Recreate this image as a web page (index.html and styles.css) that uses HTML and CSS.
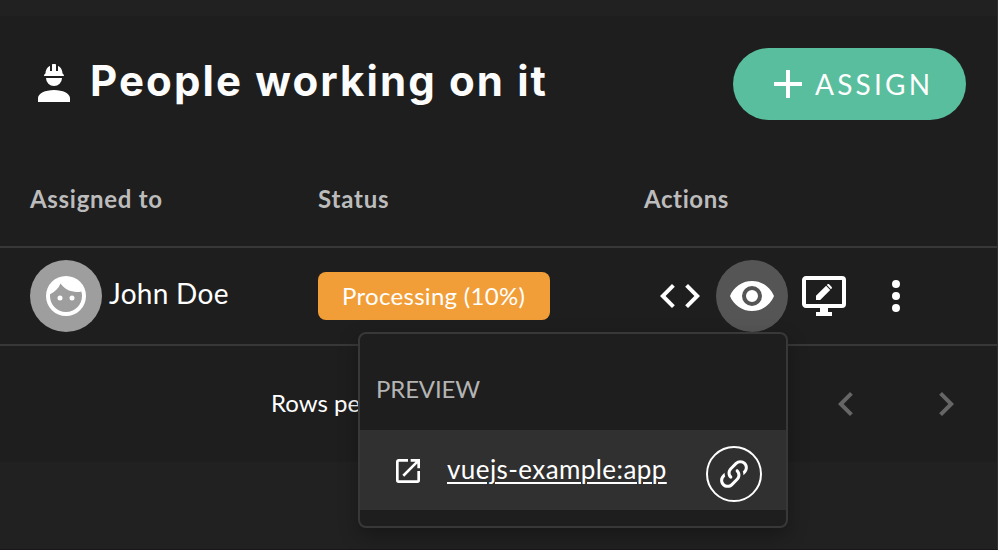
FILE: index.html
```html
<!DOCTYPE html>
<html lang="en">
<head>
<meta charset="utf-8">
<title>People working on it</title>
<link rel="stylesheet" href="styles.css">
</head>
<body>
<main class="card">
  <header class="card-header">
    <svg class="icon" viewBox="0 0 24 24"><path d="M12,15C7.58,15 4,16.79 4,19V21H20V19C20,16.79 16.42,15 12,15M8,9A4,4 0 0,0 12,13A4,4 0 0,0 16,9M11.5,2C11.2,2 11,2.21 11,2.5V5.5H10V3C10,3 7.75,3.86 7.75,6.75C7.75,6.75 7,6.89 7,8H17C16.95,6.89 16.25,6.75 16.25,6.75C16.25,3.86 14,3 14,3V5.5H13V2.5C13,2.21 12.81,2 12.5,2H11.5Z"/></svg>
    <h1 class="title">People working on it</h1>
    <button class="assign">
      <svg class="icon" viewBox="0 0 24 24"><path d="M19,13H13V19H11V13H5V11H11V5H13V11H19V13Z"/></svg>
      <span class="assign-label">ASSIGN</span>
    </button>
  </header>
  <section class="table">
    <div class="row head">
      <span class="th-assigned">Assigned to</span>
      <span class="th-status">Status</span>
      <span class="th-actions">Actions</span>
    </div>
    <div class="row person">
      <div class="user">
        <span class="avatar"><svg class="icon" viewBox="0 0 24 24"><path d="M9,11.75A1.25,1.25 0 0,0 7.75,13A1.25,1.25 0 0,0 9,14.25A1.25,1.25 0 0,0 10.25,13A1.25,1.25 0 0,0 9,11.75M15,11.75A1.25,1.25 0 0,0 13.75,13A1.25,1.25 0 0,0 15,14.25A1.25,1.25 0 0,0 16.25,13A1.25,1.25 0 0,0 15,11.75M12,2A10,10 0 0,0 2,12A10,10 0 0,0 12,22A10,10 0 0,0 22,12A10,10 0 0,0 12,2M12,20C7.59,20 4,16.41 4,12C4,11.71 4,11.42 4.05,11.14C6.41,10.09 8.28,8.16 9.26,5.77C11.07,8.33 14.05,10 17.42,10C18.2,10 18.95,9.91 19.67,9.74C19.88,10.45 20,11.21 20,12C20,16.41 16.41,20 12,20Z"/></svg></span>
        <span class="name">John Doe</span>
      </div>
      <div><span class="chip"><span class="chip-label">Processing (10%)</span></span></div>
      <div class="actions">
        <span class="action"><svg class="icon" viewBox="0 0 24 24"><path d="M14.6,16.6L19.2,12L14.6,7.4L16,6L22,12L16,18L14.6,16.6M9.4,16.6L4.8,12L9.4,7.4L8,6L2,12L8,18L9.4,16.6Z"/></svg></span>
        <span class="action active"><svg class="icon" viewBox="0 0 24 24"><path d="M12,9A3,3 0 0,0 9,12A3,3 0 0,0 12,15A3,3 0 0,0 15,12A3,3 0 0,0 12,9M12,17A5,5 0 0,1 7,12A5,5 0 0,1 12,7A5,5 0 0,1 17,12A5,5 0 0,1 12,17M12,4.5C7,4.5 2.73,7.61 1,12C2.73,16.39 7,19.5 12,19.5C17,19.5 21.27,16.39 23,12C21.27,7.61 17,4.5 12,4.5Z"/></svg></span>
        <span class="action"><svg class="icon" viewBox="0 0 24 24"><path d="M21,16V4H3V16H21M21,2A2,2 0 0,1 23,4V16A2,2 0 0,1 21,18H14V20H16V22H8V20H10V18H3C1.89,18 1,17.1 1,16V4C1,2.89 1.89,2 3,2H21M8,14H10.1L15.1,8.95L13.05,6.9L8,11.9V14M15.85,8.2C16.05,8 16.05,7.65 15.85,7.45L14.55,6.15C14.35,5.95 14,5.95 13.8,6.15L13.4,6.55L15.45,8.6L15.85,8.2Z"/></svg></span>
        <span class="action"><svg class="icon" viewBox="0 0 24 24"><path d="M12,16A2,2 0 0,1 14,18A2,2 0 0,1 12,20A2,2 0 0,1 10,18A2,2 0 0,1 12,16M12,10A2,2 0 0,1 14,12A2,2 0 0,1 12,14A2,2 0 0,1 10,12A2,2 0 0,1 12,10M12,4A2,2 0 0,1 14,6A2,2 0 0,1 12,8A2,2 0 0,1 10,6A2,2 0 0,1 12,4Z"/></svg></span>
      </div>
    </div>
  </section>
  <footer class="pager">
    <span class="rows-label">Rows per page:</span>
    <div class="arrows">
      <svg class="icon" viewBox="0 0 24 24"><path d="M15.41,16.58L10.83,12L15.41,7.41L14,6L8,12L14,18L15.41,16.58Z"/></svg>
      <svg class="icon" viewBox="0 0 24 24"><path d="M8.59,16.58L13.17,12L8.59,7.41L10,6L16,12L10,18L8.59,16.58Z"/></svg>
    </div>
  </footer>
</main>
<div class="menu">
  <div class="menu-title"><span class="menu-title-text">PREVIEW</span></div>
  <div class="menu-item">
    <svg class="open-icon" viewBox="0 0 24 24"><path d="M14,3V5H17.59L7.76,14.83L9.17,16.24L19,6.41V10H21V3M19,19H5V5H12V3H5C3.89,3 3,3.9 3,5V19A2,2 0 0,0 5,21H19A2,2 0 0,0 21,19V12H19V19Z"/></svg>
    <a class="menu-link">vuejs-example:app</a>
    <span class="copy"><svg viewBox="0 0 24 24"><path d="M10.59,13.41C11,13.8 11,14.44 10.59,14.83C10.2,15.22 9.56,15.22 9.17,14.83C7.22,12.88 7.22,9.71 9.17,7.76V7.76L12.71,4.22C14.66,2.27 17.83,2.27 19.78,4.22C21.73,6.17 21.73,9.34 19.78,11.29L18.29,12.78C18.3,11.96 18.17,11.14 17.89,10.36L18.36,9.88C19.54,8.71 19.54,6.81 18.36,5.64C17.19,4.46 15.29,4.46 14.12,5.64L10.59,9.17C9.41,10.34 9.41,12.24 10.59,13.41M13.41,9.17C13.8,8.78 14.44,8.78 14.83,9.17C16.78,11.12 16.78,14.29 14.83,16.24V16.24L11.29,19.78C9.34,21.73 6.17,21.73 4.22,19.78C2.27,17.83 2.27,14.66 4.22,12.71L5.71,11.22C5.7,12.04 5.83,12.86 6.11,13.65L5.64,14.12C4.46,15.29 4.46,17.19 5.64,18.36C6.81,19.54 8.71,19.54 9.88,18.36L13.41,14.83C14.59,13.66 14.59,11.76 13.41,10.59C13,10.2 13,9.56 13.41,9.17Z"/></svg></span>
  </div>
</div>
</body>
</html>
```
FILE: styles.css
```css
* { box-sizing: border-box; }
body {
  margin: 0;
  height: 550px;
  padding-top: 16px;
  overflow: hidden;
  position: relative;
  background: #212121;
  color: #fff;
  font-family: Lato, "Liberation Sans", sans-serif;
  border-right: 1px solid #303030;
  border-bottom: 1px solid #1a151a;
}
svg { display: block; fill: currentColor; flex: none; }
.icon { width: 48px; height: 48px; }
.card { height: 446px; background: #1e1e1e; }
.card-header {
  height: 136px;
  padding: 0 31px 0 30px;
  display: flex;
  align-items: center;
}
.title {
  margin: 0 0 6px 12px;
  font: 700 42px/60px Inter, sans-serif;
  letter-spacing: 2.1px;
  color: #fcfcfc;
  white-space: nowrap;
}
.assign {
  margin-left: auto;
  width: 233px;
  height: 72px;
  padding: 0 0 0 31px;
  border: 0;
  border-radius: 36px;
  background: #58be9d;
  color: #fff;
  display: flex;
  align-items: center;
  font: 400 28px/36px Lato, sans-serif;
}
.assign-label { margin-left: 3px; letter-spacing: 3.2px; }
.row {
  display: grid;
  grid-template-columns: 288px 326px 1fr;
  align-items: center;
  padding-left: 30px;
  border-bottom: 2px solid #383838;
}
.head {
  height: 96px;
  color: #bcbcbc;
  font-weight: 700;
  font-size: 24px;
  line-height: 32px;
}
.th-assigned { letter-spacing: 0.7px; }
.th-status { letter-spacing: 0.8px; }
.th-actions { letter-spacing: 0.6px; }
.person { height: 98px; }
.user { display: flex; align-items: center; }
.avatar, .action {
  width: 72px;
  height: 72px;
  border-radius: 50%;
  display: flex;
  align-items: center;
  justify-content: center;
}
.avatar { background: #9e9e9e; }
.name { margin: 0 0 6px 7px; font-size: 28px; line-height: 36px; letter-spacing: 0.3px; }
.chip {
  width: 232px;
  height: 48px;
  border-radius: 8px;
  background: #f29e38;
  display: flex;
  align-items: center;
  padding: 0 0 2px 24px;
  font-size: 24px;
  letter-spacing: 0.3px;
  white-space: nowrap;
}
.actions { display: flex; }
.active { background: #555; }
.pager {
  height: 116px;
  display: flex;
  align-items: center;
  justify-content: space-between;
  padding: 0 27px 0 271px;
  font-size: 24px;
}
.rows-label { margin-bottom: 4px; }
.arrows { display: flex; gap: 52px; color: #666; }
.menu {
  position: absolute;
  left: 358px;
  top: 332px;
  width: 430px;
  height: 196px;
  border: 2px solid #383838;
  border-radius: 8px;
  background: #1e1e1e;
  box-shadow: 0 8px 20px rgba(0, 0, 0, 0.3);
}
.menu-title {
  height: 96px;
  padding: 37px 0 0 16px;
  color: #b4b4b4;
  font-size: 24px;
  line-height: 36px;
  letter-spacing: -0.15px;
}
.menu-item {
  height: 80px;
  padding: 0 24px 0 32px;
  background: #303030;
  display: flex;
  align-items: center;
}
.open-icon { width: 32px; height: 32px; margin-top: 2px; }
.menu-link {
  margin: 0 0 2px 23px;
  font-size: 26px;
  letter-spacing: 0.42px;
  text-decoration: underline;
  text-decoration-thickness: 2px;
  text-underline-offset: 3px;
}
.copy {
  width: 56px;
  height: 56px;
  margin: 8px 0 0 auto;
  border: 2px solid #fff;
  border-radius: 50%;
  display: flex;
  align-items: center;
  justify-content: center;
}
.copy svg { width: 36px; height: 36px; }
```
